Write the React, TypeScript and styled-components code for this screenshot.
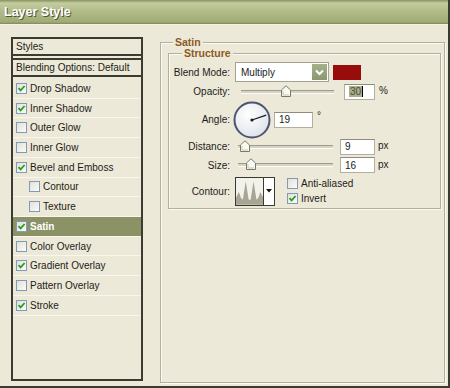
import React from 'react';
import styled, { createGlobalStyle } from 'styled-components';

const GlobalStyle = createGlobalStyle`
html, body {
    margin: 0;
    padding: 0;
    width: 450px;
    height: 388px;
    overflow: hidden;
    background: #ece9d9;
}
`;

const DARK = '#3c3b31';
const FONT = '"Liberation Sans", Arial, sans-serif';

const Dialog = styled.div`
box-sizing: border-box;
width: 450px;
height: 388px;
display: flex;
flex-direction: column;
background: #ece9d9;
border-right: 2px solid ${DARK};
border-bottom: 2px solid ${DARK};
font-family: ${FONT};
font-size: 10px;
color: #1c1c18;
`;

const TitleBar = styled.div`
flex: none;
height: 24px;
display: flex;
align-items: center;
padding-left: 4px;
background: linear-gradient(#86915b 0, #c4cca0 3px, #b1bc88 11px, #a0ac76 22px, #7d8856 24px);
border-bottom: 1px solid #f4f2e8;
color: #fff;
font: bold 12.5px ${FONT};
text-shadow: 1px 1px 0 #4f5636;
`;

const Body = styled.div`
flex: 1;
display: flex;
gap: 17px;
padding: 12px 3px 3px 11px;
min-height: 0;
`;

/* left column */

const StylesPanel = styled.div`
box-sizing: border-box;
width: 132px;
margin-bottom: 2px;
border: 2px solid ${DARK};
display: flex;
flex-direction: column;
`;

const PanelHeader = styled.div`
height: 15px;
display: flex;
align-items: center;
padding-left: 3px;
border-bottom: 2px solid ${DARK};
& + & {
    margin-top: 2px;
    border-top: 2px solid ${DARK};
}
`;

const StyleList = styled.div`
padding-top: 2px;
display: flex;
flex-direction: column;
`;

const StyleRow = styled.div<{ $indent?: boolean; $active?: boolean }>`
box-sizing: border-box;
height: 19.73px;
display: flex;
align-items: center;
gap: 3px;
padding-left: ${p => (p.$indent ? '16px' : '3px')};
border-bottom: 1px solid #f8f6ee;
background: ${p => (p.$active ? '#8b9266' : 'transparent')};
color: ${p => (p.$active ? '#fff' : 'inherit')};
font-weight: ${p => (p.$active ? 'bold' : 'normal')};
`;

const Box = styled.span`
box-sizing: border-box;
flex: none;
width: 11px;
height: 11px;
border: 1px solid #8299b8;
background: linear-gradient(135deg, #e2e1d8, #fbfbf8);
display: flex;
align-items: center;
justify-content: center;
`;

const Checkbox: React.FC<{ checked?: boolean }> = ({ checked }) => (
    <Box>
        {checked && (
            <svg width="9" height="9" viewBox="0 0 9 9">
                <path d="M1.5 4.2 L3.6 6.4 L7.6 2" fill="none" stroke="#24a024" strokeWidth="1.8" />
            </svg>
        )}
    </Box>
);

/* right column */

const Group = styled.fieldset<{ $inset?: boolean }>`
box-sizing: border-box;
margin: ${p => (p.$inset ? '0 3px 0 7px' : '0')};
padding: 0 0 ${p => (p.$inset ? '2px' : '0')} 0;
min-width: 0;
border: 1px solid #b3af9c;
box-shadow: inset 1px 1px 0 #fbfaf4, 1px 1px 0 #fbfaf4;
${p => (p.$inset ? '' : 'flex: 1;')}
`;

const Legend = styled.legend<{ $left: number }>`
margin-left: ${p => p.$left}px;
padding: 0 2px;
background: #ece9d9;
color: #8c5a24;
font: bold 10.5px ${FONT};
line-height: 11px;
`;

const Row = styled.div<{ $h: number; $mt?: number }>`
height: ${p => p.$h}px;
margin-top: ${p => p.$mt || 0}px;
display: flex;
align-items: center;
`;

const Label = styled.span`
flex: none;
width: 59px;
margin-left: 2px;
margin-right: 5px;
text-align: right;
`;

const Select = styled.div`
box-sizing: border-box;
width: 94px;
height: 20px;
display: flex;
align-items: stretch;
background: #fff;
border: 1px solid #a4a291;
padding: 1px;
`;

const SelectText = styled.span`
flex: 1;
display: flex;
align-items: center;
padding-left: 4px;
`;

const SelectButton = styled.span`
width: 15px;
display: flex;
align-items: center;
justify-content: center;
background: linear-gradient(#a4b088, #8a9870);
`;

const Swatch = styled.span`
width: 28px;
height: 15px;
margin-left: 4px;
background: #980c0c;
`;

const Track = styled.div<{ $w: number; $ml: number }>`
position: relative;
width: ${p => p.$w}px;
height: 2px;
margin-left: ${p => p.$ml}px;
border-top: 1px solid #9f9c8e;
border-bottom: 1px solid #fdfcf6;
background: #d6d3c4;
`;

const Thumb = styled.svg<{ $x: number }>`
position: absolute;
left: ${p => p.$x}px;
top: -6px;
`;

const Slider: React.FC<{ width: number; ml: number; at: number }> = ({ width, ml, at }) => (
    <Track $w={width} $ml={ml}>
        <Thumb $x={at - 5} width="10" height="12" viewBox="0 0 10 12">
            <path d="M0.5 5 L5 0.8 L9.5 5 L9.5 11.5 L0.5 11.5 Z" fill="#fafaf4" stroke="#7a7a6a" />
            <path d="M2 6 L2 10 L8 10" fill="none" stroke="#c8c6b4" />
        </Thumb>
    </Track>
);

const Field = styled.div<{ $w: number; $ml: number }>`
box-sizing: border-box;
width: ${p => p.$w}px;
height: 16px;
margin-left: ${p => p.$ml}px;
display: flex;
align-items: center;
padding-left: 4px;
background: #fff;
border: 1px solid #b2af9e;
border-top-color: #8f8c7e;
`;

const Selected = styled.span`
background: #a9ae8e;
color: #4a4c3a;
padding: 0 1px;
`;

const Caret = styled.span`
width: 1px;
height: 11px;
background: #000;
`;

const Unit = styled.span<{ $ml: number; $raised?: boolean }>`
margin-left: ${p => p.$ml}px;
margin-top: -2px;
${p => (p.$raised ? 'align-self: flex-start; margin-top: 9px;' : '')}
`;

const ContourBox = styled.div`
box-sizing: border-box;
width: 40px;
height: 29px;
display: flex;
border: 1px solid #3a3a32;
background: #f2f1ea;
`;

const ContourArrow = styled.span`
width: 10px;
display: flex;
align-items: center;
justify-content: center;
border-left: 1px solid #3a3a32;
background: #fff;
`;

const Checks = styled.div`
display: flex;
flex-direction: column;
gap: 4px;
margin-left: 12px;
`;

const CheckItem = styled.label`
display: flex;
align-items: center;
gap: 3px;
`;

const styleItems: { name: string; checked: boolean; indent?: boolean; active?: boolean }[] = [
    { name: 'Drop Shadow', checked: true },
    { name: 'Inner Shadow', checked: true },
    { name: 'Outer Glow', checked: false },
    { name: 'Inner Glow', checked: false },
    { name: 'Bevel and Emboss', checked: true },
    { name: 'Contour', checked: false, indent: true },
    { name: 'Texture', checked: false, indent: true },
    { name: 'Satin', checked: true, active: true },
    { name: 'Color Overlay', checked: false },
    { name: 'Gradient Overlay', checked: true },
    { name: 'Pattern Overlay', checked: false },
    { name: 'Stroke', checked: true },
];

const angle = 19;
const rad = (angle * Math.PI) / 180;

const App: React.FC = () => {
    return (
        <Dialog>
            <GlobalStyle />
            <TitleBar>Layer Style</TitleBar>
            <Body>
                <StylesPanel>
                    <PanelHeader>Styles</PanelHeader>
                    <PanelHeader>Blending Options: Default</PanelHeader>
                    <StyleList>
                        {styleItems.map(s => (
                            <StyleRow key={s.name} $indent={s.indent} $active={s.active}>
                                <Checkbox checked={s.checked} />
                                {s.name}
                            </StyleRow>
                        ))}
                    </StyleList>
                </StylesPanel>

                <Group>
                    <Legend $left={12}>Satin</Legend>
                    <Group $inset>
                        <Legend $left={13}>Structure</Legend>
                        <Row $h={20} $mt={3}>
                            <Label>Blend Mode:</Label>
                            <Select>
                                <SelectText>Multiply</SelectText>
                                <SelectButton>
                                    <svg width="9" height="7" viewBox="0 0 9 7">
                                        <path d="M1 1.5 L4.5 5 L8 1.5" fill="none" stroke="#fff" strokeWidth="2" />
                                    </svg>
                                </SelectButton>
                            </Select>
                            <Swatch />
                        </Row>
                        <Row $h={17} $mt={1}>
                            <Label>Opacity:</Label>
                            <Slider width={93} ml={6} at={45} />
                            <Field $w={31} $ml={10}>
                                <Selected>30</Selected>
                                <Caret />
                            </Field>
                            <Unit $ml={4}>%</Unit>
                        </Row>
                        <Row $h={37} $mt={1}>
                            <Label>Angle:</Label>
                            <svg width="38" height="38" viewBox="0 0 38 38" style={{ marginLeft: -2 }}>
                                <defs>
                                    <radialGradient id="dial" cx="40%" cy="35%" r="70%">
                                        <stop offset="0" stopColor="#ffffff" />
                                        <stop offset="1" stopColor="#dde2ea" />
                                    </radialGradient>
                                </defs>
                                <circle cx="19" cy="19" r="17.5" fill="url(#dial)" stroke="#4c5472" strokeWidth="2" />
                                <line x1="19" y1="19" x2={19 + 15 * Math.cos(rad)} y2={19 - 15 * Math.sin(rad)} stroke="#1a1a1a" strokeWidth="1.3" />
                                <circle cx="19" cy="19" r="1.6" fill="#1a1a1a" />
                            </svg>
                            <Field $w={39} $ml={3}>19</Field>
                            <Unit $ml={4} $raised>°</Unit>
                        </Row>
                        <Row $h={17}>
                            <Label>Distance:</Label>
                            <Slider width={95} ml={3} at={7} />
                            <Field $w={35} $ml={7}>9</Field>
                            <Unit $ml={3}>px</Unit>
                        </Row>
                        <Row $h={18} $mt={1}>
                            <Label>Size:</Label>
                            <Slider width={95} ml={3} at={13} />
                            <Field $w={35} $ml={7}>16</Field>
                            <Unit $ml={3}>px</Unit>
                        </Row>
                        <Row $h={30} $mt={2}>
                            <Label>Contour:</Label>
                            <ContourBox>
                                <svg width="28" height="27" viewBox="0 0 28 27">
                                    <path
                                        d="M0 27 L0 20 L3 14 L5 20 L7 22 L10 3 L13 22 L15 22 L18 3 L21 22 L23 20 L25 14 L28 20 L28 27 Z"
                                        fill="#a8a594"
                                    />
                                </svg>
                                <ContourArrow>
                                    <svg width="6" height="4" viewBox="0 0 6 4">
                                        <path d="M0 0 L6 0 L3 3.5 Z" fill="#111" />
                                    </svg>
                                </ContourArrow>
                            </ContourBox>
                            <Checks>
                                <CheckItem><Checkbox />Anti-aliased</CheckItem>
                                <CheckItem><Checkbox checked />Invert</CheckItem>
                            </Checks>
                        </Row>
                    </Group>
                </Group>
            </Body>
        </Dialog>
    );
};

export default App;
